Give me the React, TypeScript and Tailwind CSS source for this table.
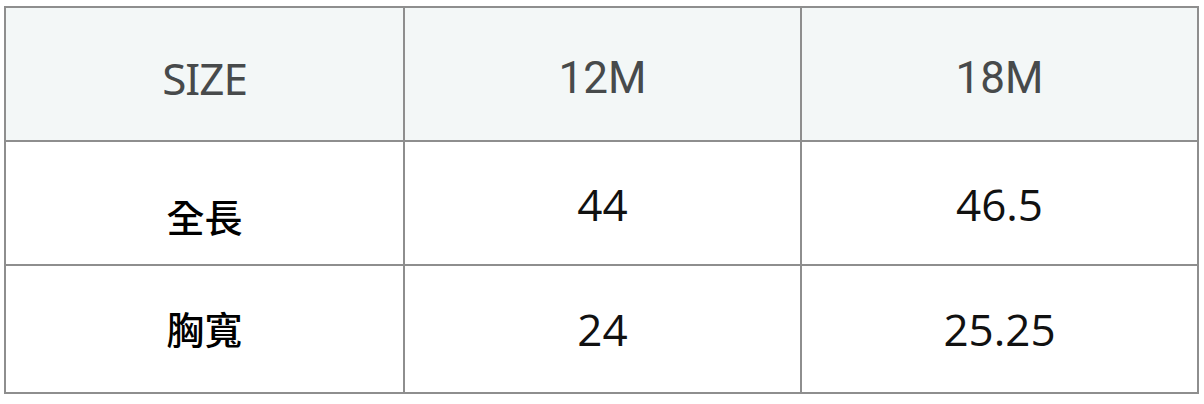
import React from "react";

const head = "flex items-center justify-center bg-[#f3f7f7] text-[#474a4b] text-[44px] font-normal";
const cjk = "flex items-center justify-center bg-white text-black text-[38px] font-medium";
const num = "flex items-center justify-center bg-white text-[#111] text-[44px]";

export default function App() {
  return (
    <div className="w-[1204px] h-[404px] bg-white pl-[4px] pt-[6px]">
      <div
        className="grid grid-cols-[397px_395px_395px] grid-rows-[132px_122px_126px] gap-[2px] p-[2px] bg-[#8e8e8e] w-[1195px]"
        style={{ fontFamily: '"Open Sans", "Noto Sans", sans-serif' }}
      >
        <div className={head} style={{ fontFamily: '"Noto Sans", sans-serif' }}>
          <span className="pt-[8px] tracking-[-1px]">SIZE</span>
        </div>
        <div className={head} style={{ fontFamily: 'Roboto, sans-serif' }}>
          <span className="pt-[8px]">12M</span>
        </div>
        <div className={head} style={{ fontFamily: 'Roboto, sans-serif' }}>
          <span className="pt-[8px]">18M</span>
        </div>

        <div className={cjk} style={{ fontFamily: '"Noto Sans CJK TC", sans-serif' }}>
          <span className="pt-[24px]">全長</span>
        </div>
        <div className={num}>
          <span className="pt-[2px]">44</span>
        </div>
        <div className={num}>
          <span className="pt-[2px]">46.5</span>
        </div>

        <div className={cjk} style={{ fontFamily: '"Noto Sans CJK TC", sans-serif' }}>
          <span className="pb-[4px]">胸寬</span>
        </div>
        <div className={num}>
          <span className="pt-[0px]">24</span>
        </div>
        <div className={num}>
          <span className="pt-[0px]">25.25</span>
        </div>
      </div>
    </div>
  );
}
